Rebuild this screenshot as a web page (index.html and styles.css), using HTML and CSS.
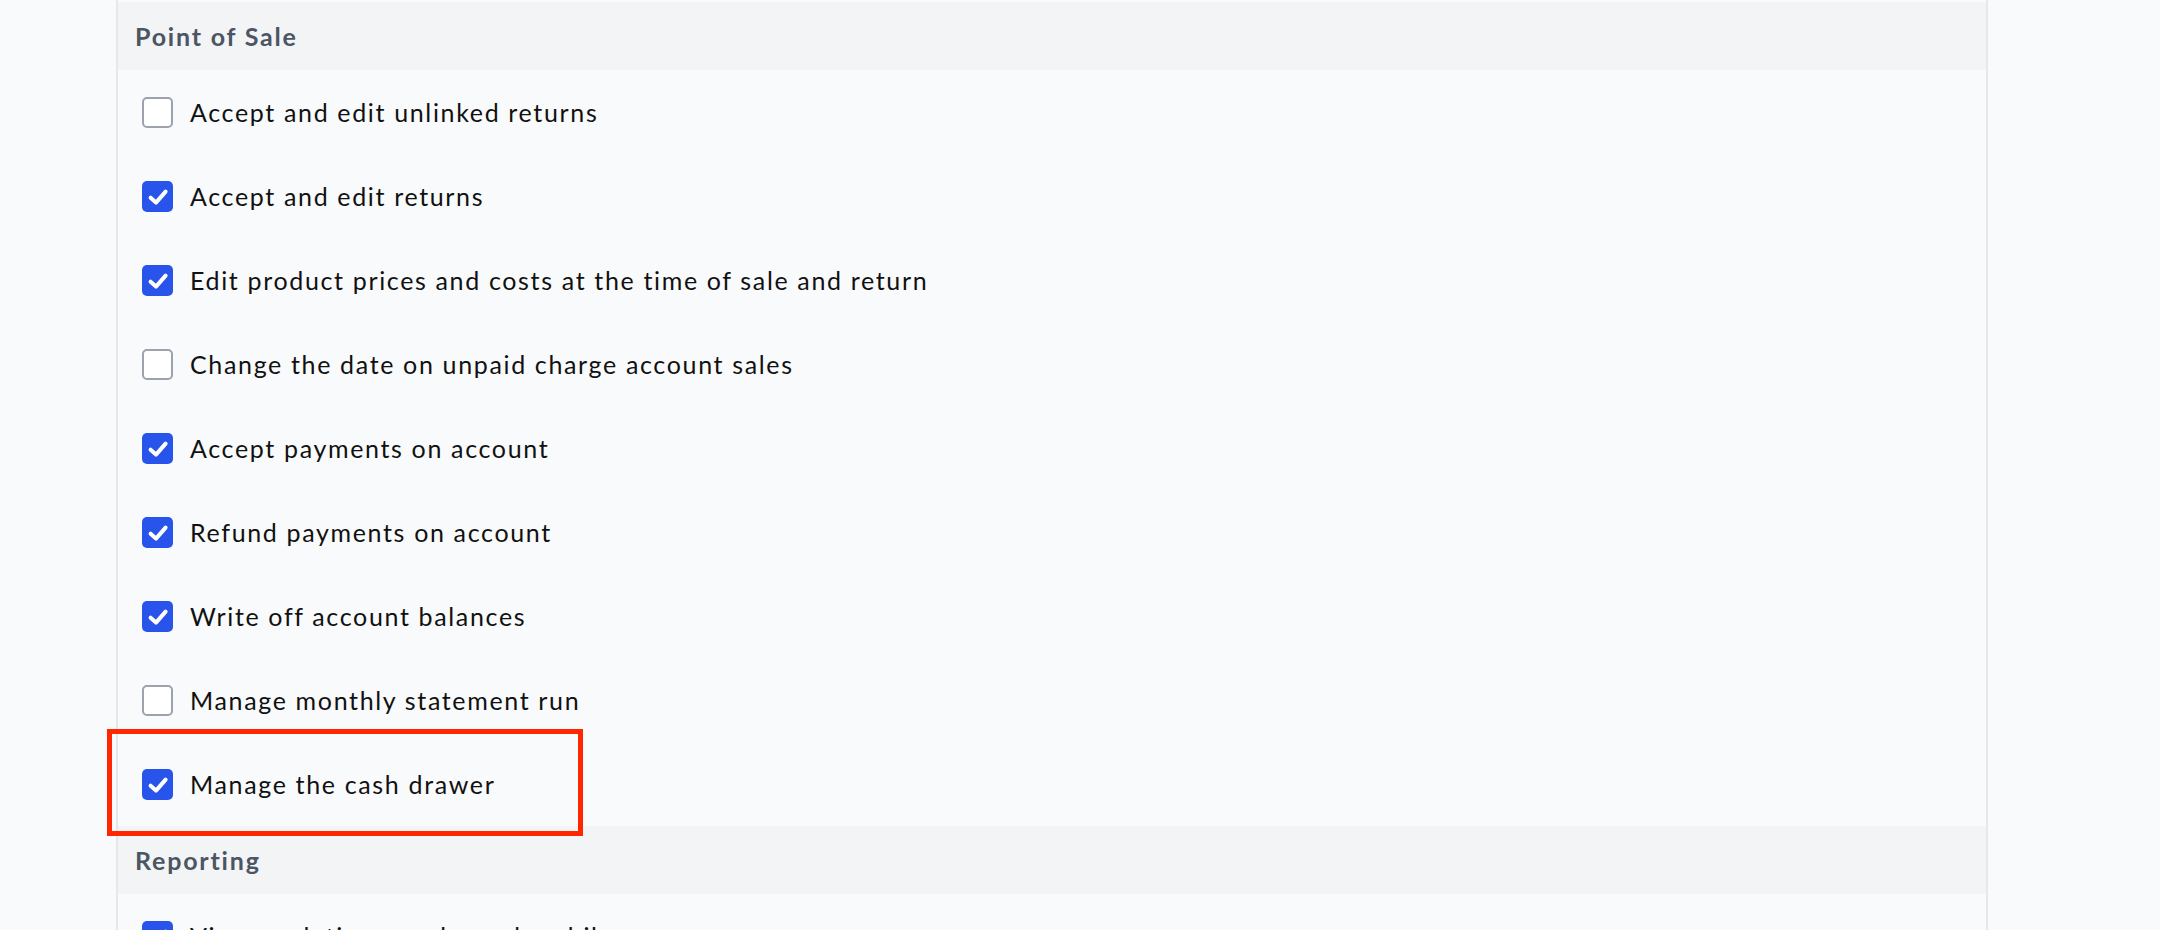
FILE: index.html
```html
<!DOCTYPE html>
<html>
<head>
<meta charset="utf-8">
<link rel="stylesheet" href="styles.css">
</head>
<body>
<div class="panel">
  <div class="section-head">Point of Sale</div>
  <div class="row"><span class="box"></span><span class="label">Accept and edit unlinked returns</span></div>
  <div class="row"><span class="box on"><svg viewBox="0 0 31 31"><path d="M8.6 16.7 L14 21.6 L23.6 10.6"/></svg></span><span class="label">Accept and edit returns</span></div>
  <div class="row"><span class="box on"><svg viewBox="0 0 31 31"><path d="M8.6 16.7 L14 21.6 L23.6 10.6"/></svg></span><span class="label">Edit product prices and costs at the time of sale and return</span></div>
  <div class="row"><span class="box"></span><span class="label">Change the date on unpaid charge account sales</span></div>
  <div class="row"><span class="box on"><svg viewBox="0 0 31 31"><path d="M8.6 16.7 L14 21.6 L23.6 10.6"/></svg></span><span class="label">Accept payments on account</span></div>
  <div class="row"><span class="box on"><svg viewBox="0 0 31 31"><path d="M8.6 16.7 L14 21.6 L23.6 10.6"/></svg></span><span class="label">Refund payments on account</span></div>
  <div class="row"><span class="box on"><svg viewBox="0 0 31 31"><path d="M8.6 16.7 L14 21.6 L23.6 10.6"/></svg></span><span class="label">Write off account balances</span></div>
  <div class="row"><span class="box"></span><span class="label">Manage monthly statement run</span></div>
  <div class="row highlighted"><span class="box on"><svg viewBox="0 0 31 31"><path d="M8.6 16.7 L14 21.6 L23.6 10.6"/></svg></span><span class="label">Manage the cash drawer</span><span class="mark"></span></div>
  <div class="section-head">Reporting</div>
  <div class="row"><span class="box on"><svg viewBox="0 0 31 31"><path d="M8.6 16.7 L14 21.6 L23.6 10.6"/></svg></span><span class="label">View analytics, graphs and mobile</span></div>
</div>
</body>
</html>
```
FILE: styles.css
```css
html, body {
  margin: 0;
  padding: 0;
  background: #f9fafb;
  height: 930px;
  overflow: hidden;
}
.panel {
  margin-left: 116px;
  width: 1868px;
  border-left: 2px solid #e5e7eb;
  border-right: 2px solid #e5e7eb;
  padding-top: 2px;
  background: #f9fafb;
  font-family: Lato, "Liberation Sans", sans-serif;
}
.section-head {
  height: 68px;
  display: flex;
  align-items: center;
  padding-left: 17px;
  background: #f3f4f6;
  color: #4b5563;
  font-weight: 700;
  font-size: 25px;
  letter-spacing: 1.8px;
}
.row {
  height: 84px;
  display: flex;
  align-items: center;
  padding-left: 24px;
  gap: 17px;
  position: relative;
}
.box {
  width: 31px;
  height: 31px;
  box-sizing: border-box;
  border: 2px solid #9ca3af;
  border-radius: 5px;
  background: #ffffff;
  flex: none;
  display: flex;
}
.box.on {
  border: none;
  background: #2954eb;
}
.box svg {
  width: 31px;
  height: 31px;
}
.box svg path {
  fill: none;
  stroke: #ffffff;
  stroke-width: 4;
  stroke-linecap: round;
  stroke-linejoin: round;
}
.label {
  font-size: 25px;
  letter-spacing: 1.65px;
  color: #111111;
}
.mark {
  position: absolute;
  left: -11px;
  top: -13px;
  width: 476px;
  height: 107px;
  box-sizing: border-box;
  border: 5px solid #ff2600;
}
```
